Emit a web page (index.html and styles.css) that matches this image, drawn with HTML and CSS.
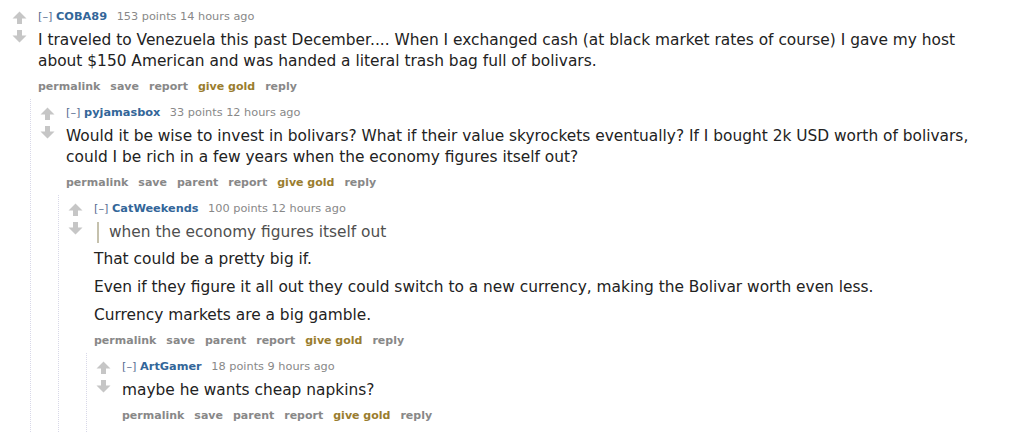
FILE: index.html
```html
<!DOCTYPE html>
<html>
<head>
<meta charset="utf-8">
<link rel="stylesheet" href="styles.css">
</head>
<body>
<div class="thread">
  <div class="comment">
    <div class="row">
      <div class="midcol">
        <svg class="arrow" viewBox="0 0 15 14"><path d="M7.5 0.5 L14.5 7.5 L10 7.5 L10 13 L5 13 L5 7.5 L0.5 7.5 Z"/></svg>
        <svg class="arrow" viewBox="0 0 15 14"><path d="M7.5 13.5 L14.5 6.5 L10 6.5 L10 1 L5 1 L5 6.5 L0.5 6.5 Z"/></svg>
      </div>
      <div class="entry">
        <p class="tagline"><span class="expand">[–]</span> <span class="author">COBA89</span> <span>153 points</span> <span>14 hours ago</span></p>
        <div class="md">
          <p>I traveled to Venezuela this past December.... When I exchanged cash (at black market rates of course) I gave my host<br>about $150 American and was handed a literal trash bag full of bolivars.</p>
        </div>
        <ul class="buttons"><li>permalink</li><li>save</li><li>report</li><li class="gold">give gold</li><li>reply</li></ul>
      </div>
    </div>
    <div class="child">
      <div class="comment">
        <div class="row">
          <div class="midcol">
            <svg class="arrow" viewBox="0 0 15 14"><path d="M7.5 0.5 L14.5 7.5 L10 7.5 L10 13 L5 13 L5 7.5 L0.5 7.5 Z"/></svg>
            <svg class="arrow" viewBox="0 0 15 14"><path d="M7.5 13.5 L14.5 6.5 L10 6.5 L10 1 L5 1 L5 6.5 L0.5 6.5 Z"/></svg>
          </div>
          <div class="entry">
            <p class="tagline"><span class="expand">[–]</span> <span class="author">pyjamasbox</span> <span>33 points</span> <span>12 hours ago</span></p>
            <div class="md">
              <p>Would it be wise to invest in bolivars? What if their value skyrockets eventually? If I bought 2k USD worth of bolivars,<br>could I be rich in a few years when the economy figures itself out?</p>
            </div>
            <ul class="buttons"><li>permalink</li><li>save</li><li>parent</li><li>report</li><li class="gold">give gold</li><li>reply</li></ul>
          </div>
        </div>
        <div class="child">
          <div class="comment">
            <div class="row">
              <div class="midcol">
                <svg class="arrow" viewBox="0 0 15 14"><path d="M7.5 0.5 L14.5 7.5 L10 7.5 L10 13 L5 13 L5 7.5 L0.5 7.5 Z"/></svg>
                <svg class="arrow" viewBox="0 0 15 14"><path d="M7.5 13.5 L14.5 6.5 L10 6.5 L10 1 L5 1 L5 6.5 L0.5 6.5 Z"/></svg>
              </div>
              <div class="entry">
                <p class="tagline"><span class="expand">[–]</span> <span class="author">CatWeekends</span> <span>100 points</span> <span>12 hours ago</span></p>
                <div class="md">
                  <blockquote>when the economy figures itself out</blockquote>
                  <p>That could be a pretty big if.</p>
                  <p>Even if they figure it all out they could switch to a new currency, making the Bolivar worth even less.</p>
                  <p>Currency markets are a big gamble.</p>
                </div>
                <ul class="buttons"><li>permalink</li><li>save</li><li>parent</li><li>report</li><li class="gold">give gold</li><li>reply</li></ul>
              </div>
            </div>
            <div class="child">
              <div class="comment last">
                <div class="row">
                  <div class="midcol">
                    <svg class="arrow" viewBox="0 0 15 14"><path d="M7.5 0.5 L14.5 7.5 L10 7.5 L10 13 L5 13 L5 7.5 L0.5 7.5 Z"/></svg>
                    <svg class="arrow" viewBox="0 0 15 14"><path d="M7.5 13.5 L14.5 6.5 L10 6.5 L10 1 L5 1 L5 6.5 L0.5 6.5 Z"/></svg>
                  </div>
                  <div class="entry">
                    <p class="tagline"><span class="expand">[–]</span> <span class="author">ArtGamer</span> <span>18 points</span> <span>9 hours ago</span></p>
                    <div class="md">
                      <p>maybe he wants cheap napkins?</p>
                    </div>
                    <ul class="buttons"><li>permalink</li><li>save</li><li>parent</li><li>report</li><li class="gold">give gold</li><li>reply</li></ul>
                  </div>
                </div>
              </div>
            </div>
          </div>
        </div>
      </div>
    </div>
  </div>
</div>
</body>
</html>
```

FILE: styles.css
```css
body {
  margin: 0;
  background: #ffffff;
  font-family: "DejaVu Sans", Verdana, sans-serif;
}

.thread {
  padding-top: 3px;
  padding-left: 3px;
  height: 429px;
  overflow: hidden;
}

.comment {
  padding-top: 6px;
  padding-left: 9px;
}

.comment.last {
  padding-bottom: 30px;
}

.row {
  display: flex;
  gap: 11px;
}

.midcol {
  flex: none;
  width: 15px;
  display: flex;
  flex-direction: column;
  gap: 4px;
  padding-top: 2px;
}

.arrow {
  display: block;
  width: 15px;
  height: 14px;
  fill: #c6c6c6;
}

.entry {
  flex: 1;
  min-width: 0;
  padding-bottom: 4px;
}

.tagline {
  margin: 0;
  font-size: 11.3px;
  line-height: 16px;
  color: #888888;
  white-space: nowrap;
}

.expand {
  color: #5a6f93;
}

.author {
  color: #336699;
  font-weight: bold;
  margin-right: 6px;
}

.md {
  margin-top: 5px;
  font-size: 15.4px;
  line-height: 21px;
  color: #222222;
  white-space: nowrap;
}

.md p {
  margin: 0;
}

.md p + p {
  margin-top: 7px;
}

.md blockquote {
  margin: 0 0 6px 3px;
  padding-left: 10px;
  border-left: 2px solid #c5c1ad;
  color: #4f4f4f;
}

.buttons {
  list-style: none;
  margin: 7px 0 0;
  padding: 0;
  display: flex;
  gap: 10px;
  font-size: 11px;
  font-weight: bold;
  line-height: 16px;
  color: #888888;
}

.buttons .gold {
  color: #9a7d2e;
}

.child {
  margin-left: 18px;
  border-left: 1px dotted #d8d8e8;
}
```
